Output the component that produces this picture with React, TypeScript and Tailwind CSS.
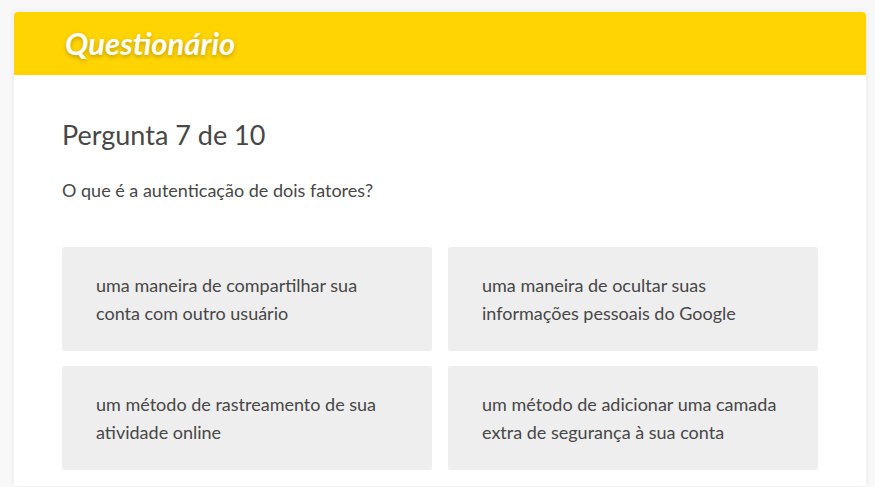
const OPTIONS = [
  "uma maneira de compartilhar sua conta com outro usuário",
  "uma maneira de ocultar suas informações pessoais do Google",
  "um método de rastreamento de sua atividade online",
  "um método de adicionar uma camada extra de segurança à sua conta",
];

export default function App() {
  return (
    <div className="min-h-[487px] bg-[#f8f8f8] pt-3 font-['Lato','Noto_Sans',sans-serif]">
      <div className="ml-[14px] w-[852px] overflow-hidden rounded-t-[4px] bg-white shadow-[0_0_6px_rgba(0,0,0,0.08)]">
        {/* Header */}
        <div className="flex h-[63px] items-center bg-[#ffd400] pl-[51px]">
          <h1 className="text-[31px] font-bold italic text-white [text-shadow:0_2px_4px_rgba(0,0,0,0.25)]">
            Questionário
          </h1>
        </div>

        {/* Body */}
        <div className="px-12 pt-[42px] pb-4">
          <h2 className="text-[27px] leading-[36px] text-[#474747]">Pergunta 7 de 10</h2>
          <p className="mt-[23px] text-[18px] leading-[28px] text-[#474747]">
            O que é a autenticação de dois fatores?
          </p>

          <div className="mt-[43px] grid grid-cols-2 gap-x-4 gap-y-[15px]">
            {OPTIONS.map((opt) => (
              <button
                key={opt}
                className="flex h-[104px] items-center rounded-[3px] bg-[#eeeeee] px-[34px] text-left text-[18px] leading-[28px] text-[#474747]"
              >
                <span className="max-w-[305px]">{opt}</span>
              </button>
            ))}
          </div>
        </div>
      </div>
    </div>
  );
}
